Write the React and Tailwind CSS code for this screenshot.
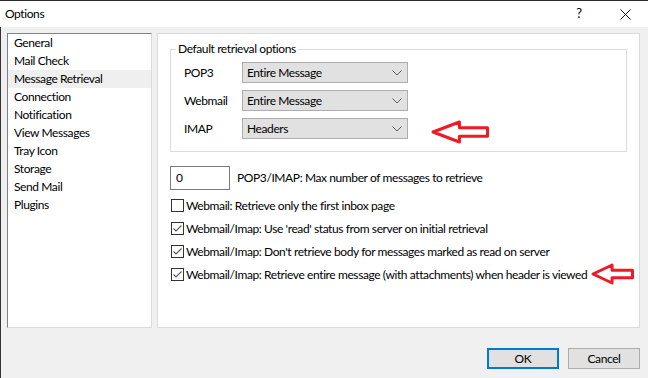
import { useState } from 'react'

const pages = [
  'General',
  'Mail Check',
  'Message Retrieval',
  'Connection',
  'Notification',
  'View Messages',
  'Tray Icon',
  'Storage',
  'Send Mail',
  'Plugins',
]

function Chevron() {
  return (
    <svg width="10" height="6" viewBox="0 0 10 6" className="shrink-0">
      <path d="M0.5 0.5 L5 5 L9.5 0.5" fill="none" stroke="#606060" strokeWidth="1" />
    </svg>
  )
}

function Select({ value }) {
  return (
    <div className="w-[166px] h-[21px] bg-[#e1e1e1] border border-[#adadad] flex items-center pl-[4px] pr-[5px]">
      <span className="flex-1">{value}</span>
      <Chevron />
    </div>
  )
}

function Check({ checked, label }) {
  return (
    <div className="h-[23px] flex items-start">
      <span className="w-[13px] h-[13px] border border-[#333333] bg-white flex items-center justify-center shrink-0">
        {checked && (
          <svg width="11" height="11" viewBox="0 0 11 11">
            <path d="M1.5 5.5 L4 8 L9.5 2.5" fill="none" stroke="#5a5a5a" strokeWidth="1.1" />
          </svg>
        )}
      </span>
      <span className="ml-[2px] leading-[13px] whitespace-nowrap">{label}</span>
    </div>
  )
}

// red annotation arrow pointing left
function RedArrow({ w, h, className }) {
  const head = w * 0.49
  const t = h * 0.26
  return (
    <svg width={w} height={h} viewBox={`0 0 ${w} ${h}`} className={className}>
      <path
        d={`M2 ${h / 2} L${head} 2 L${head} ${t + 1.5} L${w - 1.5} ${t + 1.5} L${w - 1.5} ${h - t - 1.5} L${head} ${h - t - 1.5} L${head} ${h - 2} Z`}
        fill="white"
        stroke="#ed1c24"
        strokeWidth="3"
        strokeLinejoin="round"
      />
    </svg>
  )
}

export default function App() {
  const [sel, setSel] = useState(2)

  return (
    <div className="w-[648px] h-[378px] bg-[#f0f0f0] flex flex-col text-[12px] tracking-[-0.4px] text-black font-['Lato',sans-serif] border-t border-[#2b2b2b] overflow-hidden">
      <div className="h-[26px] bg-white flex items-center pl-[5px]">
        <span className="flex-1 text-[12px]">Options</span>
        <span className="w-[46px] text-center text-[13px]">?</span>
        <span className="w-[46px] flex justify-center">
          <svg width="11" height="11" viewBox="0 0 11 11">
            <path d="M0.5 0.5 L10.5 10.5 M10.5 0.5 L0.5 10.5" stroke="#111" strokeWidth="1" />
          </svg>
        </span>
      </div>

      <div className="flex-1 flex flex-col border-l border-[#333] pl-[6px]">
        <div className="flex gap-[5px] pt-[6px]">
          <div className="w-[145px] h-[295px] bg-white border border-t-[#828282] border-l-[#828282] border-r-[#dadada] border-b-[#dadada] flex flex-col">
            {pages.map((p, i) => (
              <div
                key={p}
                onClick={() => setSel(i)}
                className={`h-[18px] leading-[18px] pl-[6px] ${i === sel ? 'bg-[#efefef]' : ''}`}
              >
                {p}
              </div>
            ))}
          </div>

          <div className="relative w-[483px] h-[295px] bg-white border border-[#dadada] pl-[12px] pt-[7px]">
            <fieldset className="w-[457px] h-[111px] border border-[#dcdcdc] pl-[13px] pt-[5px]">
              <legend className="ml-[-8px] px-[2px] leading-[16px]">Default retrieval options</legend>
              <div className="flex flex-col gap-[7px]">
                {[
                  ['POP3', 'Entire Message'],
                  ['Webmail', 'Entire Message'],
                  ['IMAP', 'Headers'],
                ].map(([l, v]) => (
                  <div key={l} className="flex items-center">
                    <span className="w-[58px]">{l}</span>
                    <Select value={v} />
                  </div>
                ))}
              </div>
            </fieldset>

            <div className="flex items-center mt-[14px]">
              <div className="w-[60px] h-[24px] border border-[#7a7a7a] bg-white pl-[5px] leading-[22px]">0</div>
              <span className="ml-[7px]">POP3/IMAP: Max number of messages to retrieve</span>
            </div>

            <div className="mt-[9px] pl-[1px] flex flex-col">
              <Check checked={false} label="Webmail: Retrieve only the first inbox page" />
              <Check checked label="Webmail/Imap: Use 'read' status from server on initial retrieval" />
              <Check checked label="Webmail/Imap: Don't retrieve body for messages marked as read on server" />
              <Check checked label="Webmail/Imap: Retrieve entire message (with attachments) when header is viewed" />
            </div>

            <RedArrow w={58} h={24} className="absolute left-[273px] top-[86px]" />
            <RedArrow w={43} h={22} className="absolute left-[433px] top-[229px]" />
          </div>
        </div>

        <div className="flex justify-end gap-[9px] pr-[8px] mt-[20px]">
          <button className="w-[72px] h-[21px] bg-[#e1e1e1] border-2 border-[#0078d7] leading-[17px]">OK</button>
          <button className="w-[72px] h-[21px] bg-[#e1e1e1] border border-[#adadad] leading-[19px]">Cancel</button>
        </div>
      </div>
    </div>
  )
}
